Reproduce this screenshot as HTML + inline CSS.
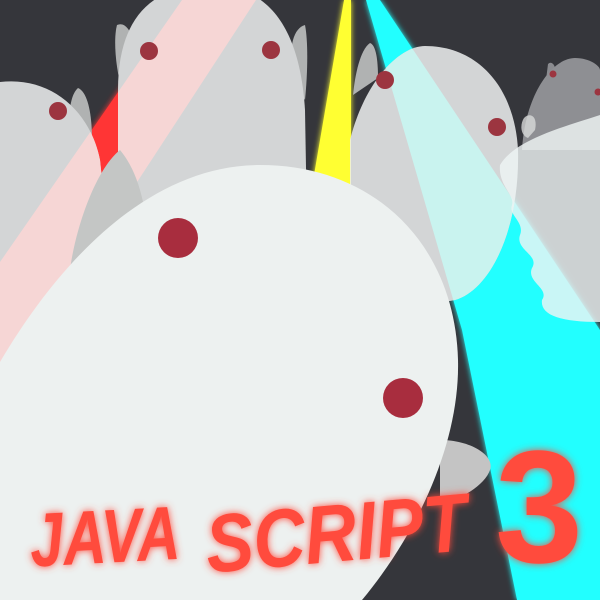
<!DOCTYPE html>
<html><head><meta charset="utf-8"><style>
html,body{margin:0;padding:0;background:#35363b;width:600px;height:600px;overflow:hidden}
svg{display:block}
</style></head><body>
<svg width="600" height="600" viewBox="0 0 600 600" xmlns="http://www.w3.org/2000/svg">
<defs>
<filter id="glow" x="-20%" y="-20%" width="140%" height="140%"><feGaussianBlur stdDeviation="3" result="b"/><feMerge><feMergeNode in="b"/><feMergeNode in="SourceGraphic"/></feMerge></filter>
<filter id="tglow" x="-10%" y="-30%" width="120%" height="160%"><feGaussianBlur stdDeviation="4" result="b"/><feMerge><feMergeNode in="b"/><feMergeNode in="SourceGraphic"/></feMerge></filter>
<clipPath id="gh">
<path d="M118,400 L118,90 C118,20 150,-15 210,-15 C270,-15 300,30 305,110 L310,400 Z"/>
<path d="M0,400 L0,82 C50,76 90,110 100,160 L125,400 Z"/>
<path d="M350,320 L350,140 C365,80 400,46 425,46 C480,46 515,90 518,150 C520,230 490,290 455,300 Z"/>
</clipPath>
</defs>
<rect width="600" height="600" fill="#35363b"/>
<polygon points="182,0 256,0 0,392 0,262" fill="#ff3535" filter="url(#glow)"/>
<polygon points="344,0 351,0 351,210 308,210" fill="#ffff33" filter="url(#glow)"/>
<polygon points="366,0 380,0 600,330 600,600 517,600 462,330" fill="#22ffff" filter="url(#glow)"/>
<path d="M117,25 C128,20 138,40 136,75 L122,90 C116,70 113,40 117,25Z" fill="#b0b2b2"/>
<path d="M305,25 C294,28 288,45 292,80 L305,100 C308,70 308,40 305,25Z" fill="#b0b2b2"/>
<path d="M78,88 C70,95 68,115 70,135 L92,140 C92,115 88,92 78,88Z" fill="#b0b2b2"/>
<path d="M370,43 C360,50 355,75 353,95 L378,78 C378,60 376,45 370,43Z" fill="#b0b2b2"/>
<path d="M118,400 L118,90 C118,20 150,-15 210,-15 C270,-15 300,30 305,110 L310,400 Z" fill="#d3d5d6"/>
<path d="M0,400 L0,82 C50,76 90,110 100,160 L125,400 Z" fill="#d3d5d6"/>
<path d="M350,320 L350,140 C365,80 400,46 425,46 C480,46 515,90 518,150 C520,230 490,290 455,300 Z" fill="#d3d5d6"/>
<g clip-path="url(#gh)">
<polygon points="182,0 256,0 0,392 0,262" fill="#f6d6d5"/>
<polygon points="344,0 351,0 351,210 308,210" fill="#f1f2ce"/>
<polygon points="366,0 380,0 600,330 600,600 517,600 462,330" fill="#c9f3ef"/>
</g>
<circle cx="149" cy="51" r="9" fill="#9c3540"/>
<circle cx="271" cy="50" r="9" fill="#9c3540"/>
<circle cx="58" cy="111" r="9" fill="#9c3540"/>
<circle cx="385" cy="80" r="9" fill="#9c3540"/>
<circle cx="497" cy="127" r="9" fill="#9c3540"/>
<path d="M548,64 C552,60 556,66 556,74 L546,80 Z" fill="#8a8b8f"/>
<path d="M522,150 C525,95 552,58 575,58 C590,58 600,66 600,70 L600,150 Z" fill="#8e8f93"/>
<circle cx="553" cy="74" r="3.5" fill="#9c3540"/>
<circle cx="598" cy="92" r="3.5" fill="#9c3540"/>
<path d="M524,118 C530,112 538,116 535,130 L528,138 C520,135 520,124 524,118Z" fill="#d8d9da" opacity=".8"/>
<path d="M600,115 C560,128 515,140 500,165 C498,185 515,195 512,205 C508,215 525,222 520,235 C515,250 540,255 532,268 C526,282 550,288 542,300 C540,315 560,322 600,322 Z" fill="#eef4f4" opacity=".82"/>
<path d="M120,150 C95,170 75,230 70,270 L150,290 C150,230 145,180 120,150Z" fill="#c4c6c5"/>
<path d="M440,440 C470,440 495,455 490,470 C485,485 460,500 440,505 Z" fill="#c4c4c4"/>
<path d="M0,600 L0,362 C60,260 150,165 260,165 C375,165 455,245 458,360 C460,440 420,530 362,600 Z" fill="#edf1f0"/>
<circle cx="178" cy="238" r="20" fill="#a82d3e"/>
<circle cx="403" cy="398" r="20" fill="#a82d3e"/>
<g filter="url(#tglow)" fill="#ff4b3e" font-family="Liberation Sans, sans-serif" font-weight="bold">
<text x="30" y="563" font-size="76" font-style="italic" textLength="150" lengthAdjust="spacingAndGlyphs" transform="rotate(-3 100 540)">JAVA</text>
<text x="205" y="562" font-size="82" font-style="italic" textLength="262" lengthAdjust="spacingAndGlyphs" transform="rotate(-5 330 530)">SCRIPT</text>
<text x="495" y="562" font-size="160" textLength="88" lengthAdjust="spacingAndGlyphs">3</text>
</g>
</svg>
</body></html>
